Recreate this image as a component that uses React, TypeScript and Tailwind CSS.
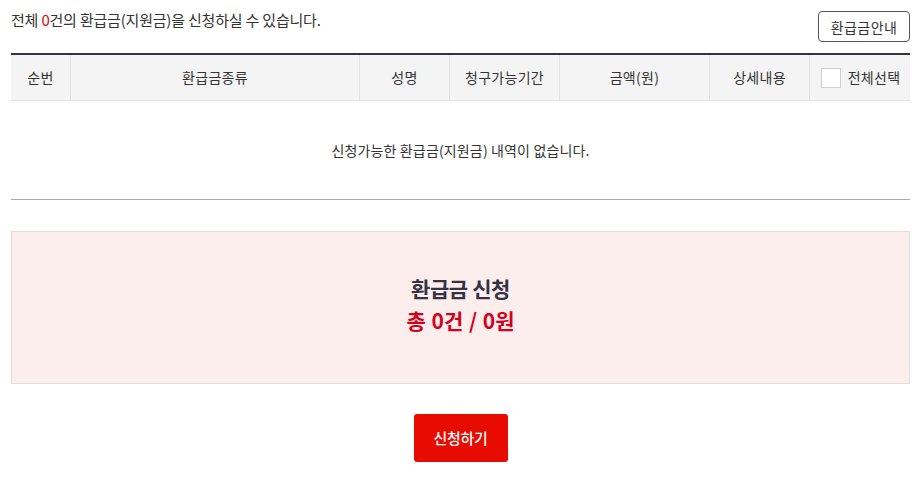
import React from "react";

const cols = [
  { label: "순번", w: "w-[60px]" },
  { label: "환급금종류", w: "w-[289px]" },
  { label: "성명", w: "w-[90px]" },
  { label: "청구가능기간", w: "w-[110px]" },
  { label: "금액(원)", w: "w-[150px]" },
  { label: "상세내용", w: "w-[100px]" },
];

export default function App() {
  return (
    <div
      className="w-[923px] h-[477px] bg-white text-[#333] px-[11px] pr-[13px]"
      style={{ fontFamily: '"Noto Sans CJK KR", "Noto Sans", sans-serif' }}
    >
      <div className="flex items-start justify-between h-[53px] pt-[11px]">
        <p className="text-[15px] leading-[20px] -mt-[1px] tracking-[-0.2px]">
          전체 <span className="text-[#e60012]">0</span>건의 환급금(지원금)을 신청하실 수 있습니다.
        </p>
        <button className="h-[31px] w-[92px] border border-[#555] rounded-[4px] text-[14px] leading-none text-[#333] bg-white tracking-[0.4px]">
          환급금안내
        </button>
      </div>

      <div className="border-t-2 border-[#333344]">
        <div className="flex h-[46px] bg-[#f4f4f4] border-b border-[#e2e2e2] text-[14px] tracking-[0.3px]">
          {cols.map((c, i) => (
            <div
              key={c.label}
              className={`${c.w} flex items-center justify-center ${i < 6 ? "border-r border-[#e2e2e2]" : ""}`}
            >
              {c.label}
            </div>
          ))}
          <div className="flex-1 flex items-center justify-center gap-[7px] pl-[1px]">
            <span className="w-[20px] h-[20px] bg-white border border-[#cfcfcf]" />
            <span>전체선택</span>
          </div>
        </div>
        <div className="h-[99px] flex items-center justify-center text-[14px] tracking-[0.15px] border-b border-[#aaaab2]">
          신청가능한 환급금(지원금) 내역이 없습니다.
        </div>
      </div>

      <div className="mt-[31px] h-[153px] bg-[#fdeeee] border border-[#e3dede] flex flex-col items-center justify-center pb-[8px]">
        <div className="text-[21px] font-bold leading-[32px] text-[#333344] tracking-[-0.4px]">
          환급금 신청
        </div>
        <div className="text-[21px] font-bold leading-[32px] text-[#d7001b] tracking-[0px] [word-spacing:1px]">
          총 0건 / 0원
        </div>
      </div>

      <div className="flex justify-center mt-[30px]">
        <button className="w-[94px] h-[48px] bg-[#e80b00] text-white rounded-[3px] text-[15px] font-medium tracking-[-0.3px]">
          신청하기
        </button>
      </div>
    </div>
  );
}
